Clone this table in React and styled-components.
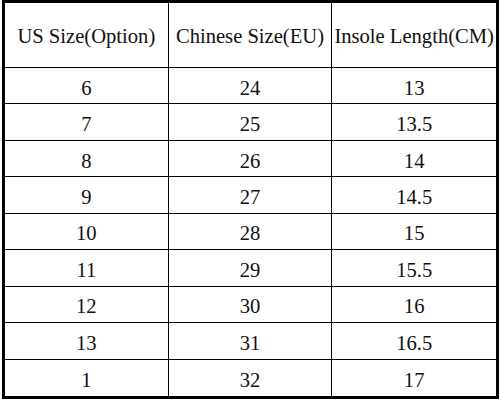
import styled, { createGlobalStyle } from 'styled-components'

const GlobalStyle = createGlobalStyle`
  body {
    margin: 0;
    background: #ffffff;
    font-family: "Liberation Serif", "DejaVu Serif", serif;
  }
`

const rows = [
  ['6', '24', '13'],
  ['7', '25', '13.5'],
  ['8', '26', '14'],
  ['9', '27', '14.5'],
  ['10', '28', '15'],
  ['11', '29', '15.5'],
  ['12', '30', '16'],
  ['13', '31', '16.5'],
  ['1', '32', '17'],
]

const headers = ['US Size(Option)', 'Chinese Size(EU)', 'Insole Length(CM)']

export default function App() {
  return (
    <>
      <GlobalStyle />
      <Table>
        {headers.map((h, i) => (
          <Cell key={h} $last={i === 2} $header>{h}</Cell>
        ))}
        {rows.map((r, ri) =>
          r.map((v, ci) => (
            <Cell key={ri + '-' + ci} $last={ci === 2} $bottom={ri === rows.length - 1}>
              {v}
            </Cell>
          ))
        )}
      </Table>
    </>
  )
}

const Table = styled.div`
  box-sizing: border-box;
  width: 497px;
  height: 399px;
  margin-left: 2px;
  border: 3px solid #000;
  display: grid;
  grid-template-columns: repeat(3, 1fr);
  grid-template-rows: 65px repeat(9, 1fr);
  background: #fff;
`

const Cell = styled.div`
  display: flex;
  align-items: center;
  justify-content: center;
  font-family: "Liberation Serif", "DejaVu Serif", serif;
  font-size: 20.6px;
  color: #111;
  white-space: nowrap;
  border-right: ${p => (p.$last ? 'none' : '1.5px solid #000')};
  border-bottom: ${p => (p.$bottom ? 'none' : '1.5px solid #000')};
  padding-top: ${p => (p.$header ? '3px' : '5px')};
  box-sizing: border-box;
`
